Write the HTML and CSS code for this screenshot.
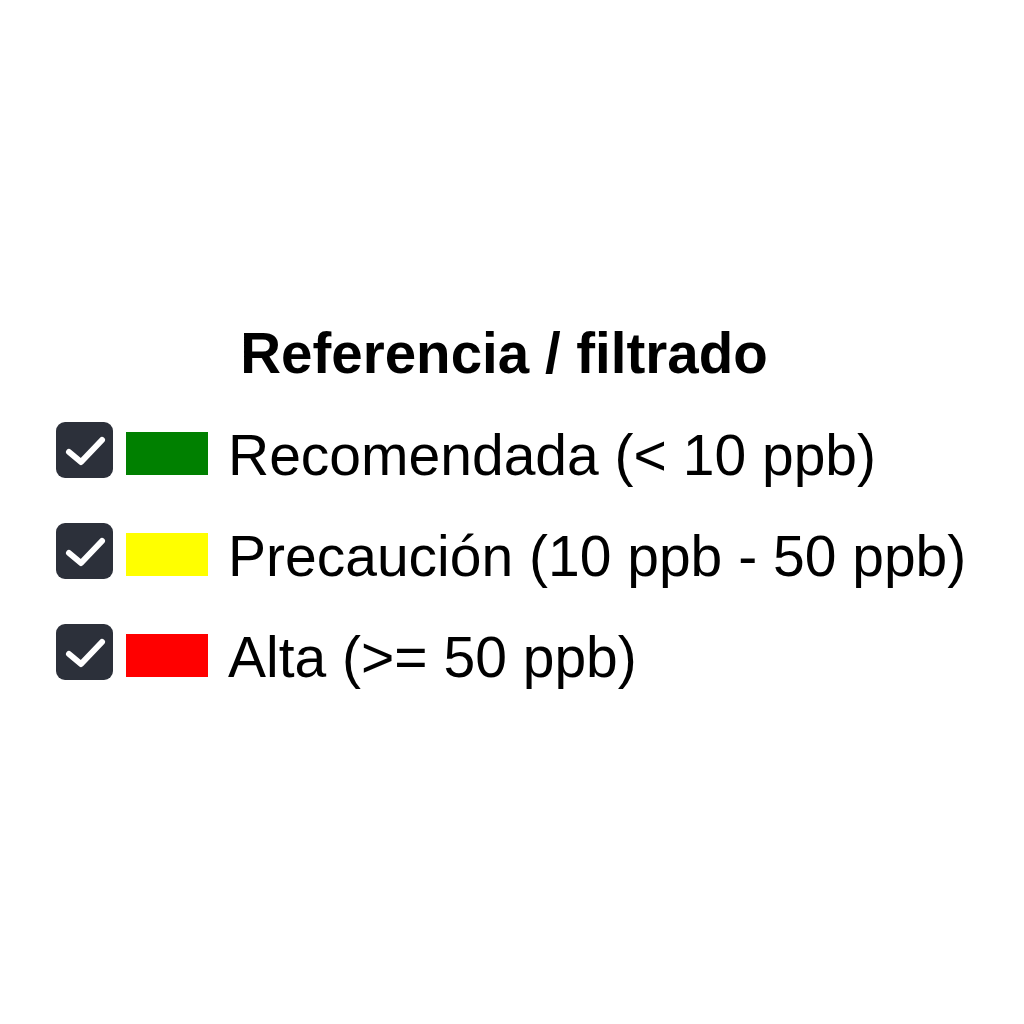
FILE: index.html
```html
<!DOCTYPE html>
<html lang="es">
<head>
<meta charset="utf-8">
<title>Referencia / filtrado</title>
<link rel="stylesheet" href="styles.css">
</head>
<body>
<div class="legend">
  <div class="legend-title">Referencia / filtrado</div>
  <div class="legend-rows">
    <label class="legend-row">
      <span class="check"><svg viewBox="0 0 57 56" width="57" height="56"><path d="M13 30 L25 40 L46 18" fill="none" stroke="#fff" stroke-width="6" stroke-linecap="round" stroke-linejoin="round"/></svg></span>
      <span class="swatch swatch-green"></span>
      <span class="legend-text">Recomendada (&lt; 10 ppb)</span>
    </label>
    <label class="legend-row">
      <span class="check"><svg viewBox="0 0 57 56" width="57" height="56"><path d="M13 30 L25 40 L46 18" fill="none" stroke="#fff" stroke-width="6" stroke-linecap="round" stroke-linejoin="round"/></svg></span>
      <span class="swatch swatch-yellow"></span>
      <span class="legend-text">Precaución (10 ppb - 50 ppb)</span>
    </label>
    <label class="legend-row">
      <span class="check"><svg viewBox="0 0 57 56" width="57" height="56"><path d="M13 30 L25 40 L46 18" fill="none" stroke="#fff" stroke-width="6" stroke-linecap="round" stroke-linejoin="round"/></svg></span>
      <span class="swatch swatch-red"></span>
      <span class="legend-text">Alta (&gt;= 50 ppb)</span>
    </label>
  </div>
</div>
</body>
</html>
```
FILE: styles.css
```css
html, body {
  margin: 0;
  padding: 0;
  background: #fff;
}
body {
  font-family: "Liberation Sans", Arial, sans-serif;
  color: #000;
}
.legend {
  width: 896px;
  margin-left: 56px;
  padding-top: 322px;
}
.legend-title {
  font-size: 56.5px;
  font-weight: bold;
  line-height: 64px;
  text-align: center;
  white-space: nowrap;
}
.legend-rows {
  margin-top: 36px;
  display: flex;
  flex-direction: column;
  gap: 34px;
}
.legend-row {
  display: flex;
  align-items: flex-start;
  white-space: nowrap;
}
.check {
  width: 57px;
  height: 56px;
  border-radius: 9px;
  background: #2c303a;
  display: block;
  flex: none;
}
.check svg {
  display: block;
}
.swatch {
  display: block;
  width: 82px;
  height: 43px;
  margin-top: 10px;
  margin-left: 13px;
  flex: none;
}
.swatch-green { background: #008000; }
.swatch-yellow { background: #ffff00; }
.swatch-red { background: #ff0000; }
.legend-text {
  font-size: 57px;
  line-height: 67px;
  margin-left: 20px;
}
```
